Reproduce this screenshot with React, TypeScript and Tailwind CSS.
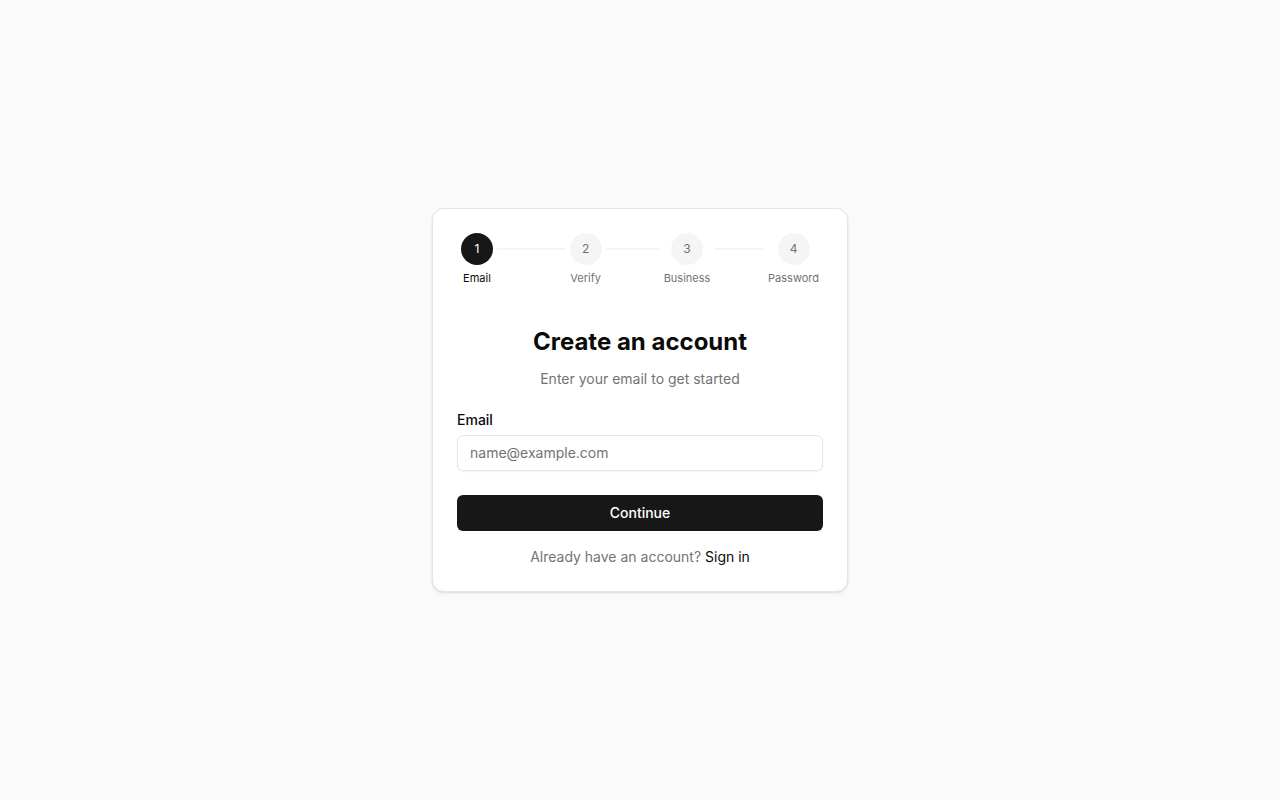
const steps = [
  { n: 1, label: 'Email' },
  { n: 2, label: 'Verify' },
  { n: 3, label: 'Business' },
  { n: 4, label: 'Password' },
];

function StepItem({ n, label, active }: { n: number; label: string; active: boolean }) {
  return (
    <div className="flex flex-col items-center">
      <div
        className={
          active
            ? 'w-8 h-8 rounded-full bg-[#171717] text-white flex items-center justify-center text-xs'
            : 'w-8 h-8 rounded-full bg-[#f5f5f5] text-[#737373] flex items-center justify-center text-xs'
        }
      >
        {n}
      </div>
      <span
        className={
          active
            ? 'mt-[5px] text-[11px] leading-4 text-[#0a0a0a] whitespace-nowrap'
            : 'mt-[5px] text-[11px] leading-4 text-[#737373] whitespace-nowrap'
        }
      >
        {label}
      </span>
    </div>
  );
}

export default function App() {
  const current = 1;
  const [first, ...rest] = steps;
  return (
    <div
      className="min-h-screen w-full bg-[#fafafa] flex items-center justify-center"
      style={{ fontFamily: 'Inter, "Liberation Sans", sans-serif' }}
    >
      <div className="w-[416px] bg-white border border-[#e5e5e5] rounded-xl shadow-sm p-6">
        {/* Stepper */}
        <div className="flex items-start px-1">
          <StepItem n={first.n} label={first.label} active={first.n === current} />
          {rest.map((s) => (
            <div key={s.n} className="flex flex-1 items-start">
              <div className="flex-1 h-0.5 bg-[#f5f5f5] mt-[15px] mx-1" />
              <StepItem n={s.n} label={s.label} active={s.n === current} />
            </div>
          ))}
        </div>

        {/* Header */}
        <div className="mt-[40px] text-center">
          <h1 className="text-2xl leading-8 font-bold text-[#0a0a0a]">Create an account</h1>
          <p className="mt-[11px] text-sm leading-5 text-[#737373]">Enter your email to get started</p>
        </div>

        {/* Form */}
        <div className="mt-6">
          <label className="block text-sm leading-none font-medium text-[#0a0a0a]">Email</label>
          <input
            type="email"
            placeholder="name@example.com"
            className="mt-2 w-full h-9 rounded-md border border-[#e5e5e5] px-3 pb-px text-sm text-[#0a0a0a] placeholder:text-[#737373] shadow-xs outline-none"
          />
          <button className="mt-6 w-full h-9 rounded-md bg-[#171717] text-white text-sm font-medium">
            Continue
          </button>
          <p className="mt-4 text-center text-sm leading-5 text-[#737373]">
            Already have an account? <a className="text-[#0a0a0a]">Sign in</a>
          </p>
        </div>
      </div>
    </div>
  );
}
